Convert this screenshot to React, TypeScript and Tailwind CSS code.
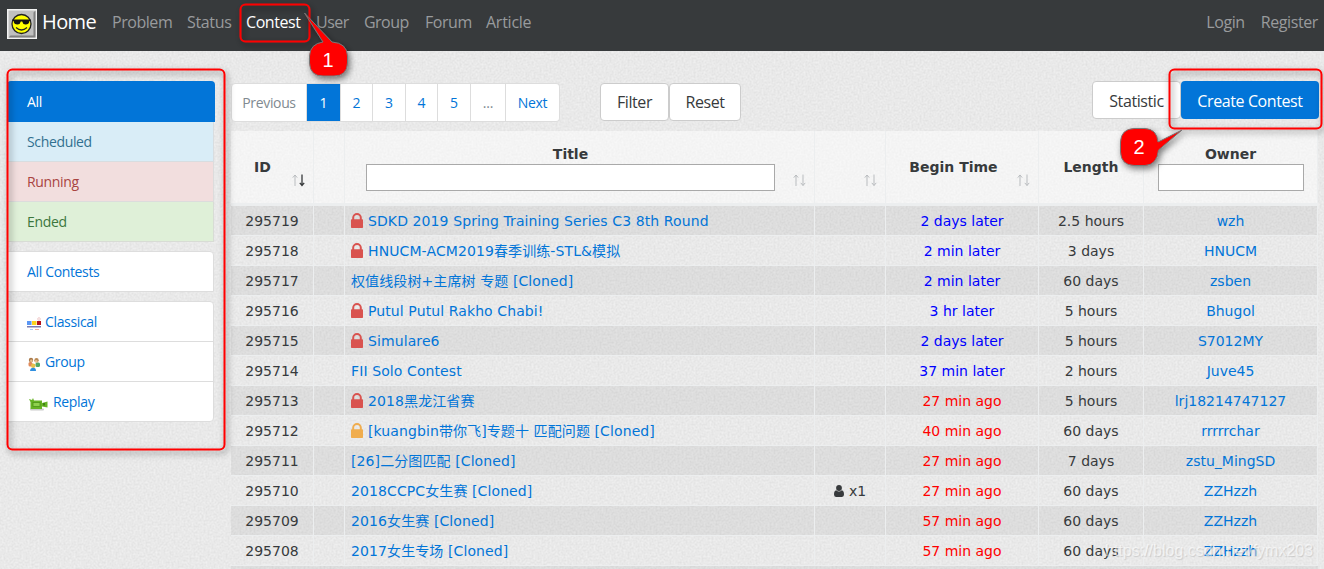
import React from "react";

const seg = "font-['Open_Sans','Noto_Sans',sans-serif]";

type Row = { id: string; lock?: "red" | "orange"; title: string; team?: string; time: string; len: string; owner: string };

const rows: Row[] = [
  { id: "295719", lock: "red", title: "SDKD 2019 Spring Training Series C3 8th Round", time: "2 days later", len: "2.5 hours", owner: "wzh" },
  { id: "295718", lock: "red", title: "HNUCM-ACM2019春季训练-STL&模拟", time: "2 min later", len: "3 days", owner: "HNUCM" },
  { id: "295717", title: "权值线段树+主席树 专题 [Cloned]", time: "2 min later", len: "60 days", owner: "zsben" },
  { id: "295716", lock: "red", title: "Putul Putul Rakho Chabi!", time: "3 hr later", len: "5 hours", owner: "Bhugol" },
  { id: "295715", lock: "red", title: "Simulare6", time: "2 days later", len: "5 hours", owner: "S7012MY" },
  { id: "295714", title: "FII Solo Contest", time: "37 min later", len: "2 hours", owner: "Juve45" },
  { id: "295713", lock: "red", title: "2018黑龙江省赛", time: "27 min ago", len: "5 hours", owner: "lrj18214747127" },
  { id: "295712", lock: "orange", title: "[kuangbin带你飞]专题十 匹配问题 [Cloned]", time: "40 min ago", len: "60 days", owner: "rrrrrchar" },
  { id: "295711", title: "[26]二分图匹配 [Cloned]", time: "27 min ago", len: "7 days", owner: "zstu_MingSD" },
  { id: "295710", title: "2018CCPC女生赛 [Cloned]", team: "x1", time: "27 min ago", len: "60 days", owner: "ZZHzzh" },
  { id: "295709", title: "2016女生赛 [Cloned]", time: "57 min ago", len: "60 days", owner: "ZZHzzh" },
  { id: "295708", title: "2017女生专场 [Cloned]", time: "57 min ago", len: "60 days", owner: "ZZHzzh" },
];

const cols = "grid grid-cols-[83px_31px_470px_71px_153px_105px_174px]";
const cell = "border-r border-[#eceeef]";

function Smiley() {
  return (
    <svg width="30" height="30" viewBox="0 0 30 30" className="shrink-0">
      <rect width="30" height="30" fill="#f2f2f2" />
      <rect x="1.5" y="1.5" width="27" height="27" fill="#c0c0c0" />
      <path d="M28.5 1.5V28.5H1.5L3.5 26.5H26.5V3.5Z" fill="#808080" />
      <circle cx="14.5" cy="15" r="9.5" fill="#ffff00" stroke="#222" strokeWidth="1.3" />
      <path d="M5.5 10.5H23.5V12H22.5Q22 15.5 18.5 15.5Q15.5 15 15.2 12.5H13.8Q13.500 15 10.500 15.500Q7 15.500 6.500 12H5.500Z" fill="#111" />
      <path d="M9 18.500Q14.500 23.500 20 18.500" fill="none" stroke="#222" strokeWidth="1.200" />
    </svg>
  );
}

function Lock({ color }: { color: "red" | "orange" }) {
  return (
    <svg width="12" height="15" viewBox="0 0 12 15" className={`mt-[7px] mr-[5px] shrink-0 ${color === "red" ? "text-[#d9534f]" : "text-[#f0ad4e]"}`}>
      <path d="M2.200 7V4.800A3.800 3.800 0 0 1 9.800 4.800V7" fill="none" stroke="currentColor" strokeWidth="2" />
      <rect y="6.300" width="12" height="8.700" rx="0.700" fill="currentColor" />
    </svg>
  );
}

function Person() {
  return (
    <svg width="10" height="12" viewBox="0 0 10 12" className="mr-[5px]">
      <circle cx="5" cy="3" r="2.900" fill="#373a3c" />
      <path d="M2.200 5.300Q5 7.700 7.800 5.300Q10 5.800 10 9.600Q10 12 8 12H2Q0 12 0 9.600Q0 5.800 2.200 5.300Z" fill="#373a3c" />
    </svg>
  );
}

function ClassicalIcon() {
  return (
    <svg width="15" height="15" viewBox="0 0 15 15" className="mt-[5px]">
      <rect x="0" y="4" width="4.500" height="4" fill="#5b97f5" />
      <rect x="5" y="4" width="4.500" height="4" fill="#fcd21c" />
      <rect x="10" y="4" width="4" height="4" fill="#b3101b" />
      <circle cx="12" cy="2" r="1.300" fill="none" stroke="#eab5b5" strokeWidth=".7" />
      <rect x="0" y="9" width="14" height="1.500" fill="#7a7cb0" />
      <rect x="3" y="12" width="3" height="1" fill="#a9cdf5" />
      <rect x="8" y="12" width="4" height="1" fill="#f0b0a0" />
    </svg>
  );
}

function GroupIcon() {
  return (
    <svg width="15" height="15" viewBox="0 0 15 15" className="mt-[5px]">
      <rect x="1.500" y="5" width="4" height="4.500" rx="1.500" fill="#e08a5a" />
      <rect x="8.500" y="5.500" width="4.500" height="4.500" rx="1.500" fill="#54a565" />
      <circle cx="4" cy="3" r="2.200" fill="#a9794a" />
      <circle cx="9.500" cy="3.300" r="2.200" fill="#b98a55" />
      <circle cx="4.300" cy="3.800" r="1.300" fill="#e8bf90" />
      <circle cx="9.200" cy="4.200" r="1.300" fill="#e8bf90" />
      <circle cx="6.200" cy="8.700" r="2.200" fill="#e8c04a" />
      <path d="M3 14Q3.500 10.800 6.200 10.800Q9 10.800 9 14Z" fill="#2f8fe0" />
    </svg>
  );
}

function ReplayIcon() {
  return (
    <svg width="23" height="15" viewBox="0 0 23 15" className="mt-[5px]">
      <rect x="3" y="11.500" width="14" height="2" rx="1" fill="#ccc" />
      <path d="M2 2L5 3L6 1L7 3.500H15V6L20.500 4.500V10.500L15 9.500V12H3.500V5Z" fill="#66b324" />
      <rect x="6" y="5.500" width="7" height="4" fill="#8fd04e" stroke="#4c9318" strokeWidth=".8" />
      <rect x="16" y="6" width="2" height="2.500" fill="#3f8014" />
    </svg>
  );
}

function Sort({ active }: { active?: boolean }) {
  return (
    <svg width="14" height="13" viewBox="0 0 14 13" fill="none" strokeWidth="1">
      <path d="M3 12V1M0.800 3.600L3 1L5.200 3.600" stroke="#b9bcbf" />
      <path d="M10 0.500V11.500M7.800 8.900L10 11.500L12.200 8.900" stroke={active ? "#373a3c" : "#b9bcbf"} strokeWidth={active ? "1.300" : "1"} />
    </svg>
  );
}

function Grain() {
  return (
    <svg className="absolute inset-0 h-full w-full" aria-hidden="true">
      <filter id="grain" colorInterpolationFilters="sRGB" x="0" y="0" width="100%" height="100%">
        <feTurbulence type="fractalNoise" baseFrequency="0.5" numOctaves="2" seed="4" />
        <feColorMatrix type="matrix" values="0.09 0 0 0 0.868  0.09 0 0 0 0.868  0.09 0 0 0 0.868  0 0 0 0 1" />
      </filter>
      <rect width="100%" height="100%" filter="url(#grain)" />
    </svg>
  );
}

const navItems = [
  { t: "Problem", c: "w-[75px] tracking-[-0.45px]" },
  { t: "Status", c: "w-[59px] tracking-[-0.35px]" },
  { t: "Contest", c: "w-[70px] tracking-[-0.45px] text-white" },
  { t: "User", c: "w-[48px] tracking-[-0.5px]" },
  { t: "Group", c: "w-[61px] tracking-[-0.55px]" },
  { t: "Forum", c: "w-[61px] tracking-[-0.45px]" },
  { t: "Article", c: "w-[60px] tracking-[-0.25px]" },
];

const pages = [
  { t: "Previous", c: "w-[76px] text-[#818a91] border-l rounded-l-[4px] tracking-[-0.35px]" },
  { t: "1", c: "w-[34px] bg-[#0275d8] text-white border-[#0275d8]" },
  { t: "2", c: "w-[32px] text-[#0275d8]" },
  { t: "3", c: "w-[33px] text-[#0275d8]" },
  { t: "4", c: "w-[32px] text-[#0275d8]" },
  { t: "5", c: "w-[33px] text-[#0275d8]" },
  { t: "...", c: "w-[35px] text-[#818a91]" },
  { t: "Next", c: "w-[54px] text-[#0275d8] rounded-r-[4px]" },
];

export default function App() {
  return (
    <div className="relative flex h-[569px] w-[1324px] flex-col overflow-hidden bg-[#e9e9e9]">
      <Grain />
      <header className={`relative flex h-[51px] shrink-0 items-start bg-[#373a3c] pl-[7px] text-base text-[#999b9d] ${seg}`}>
        <div className="mt-[9px] flex h-[30px] items-center">
          <Smiley />
        </div>
        <span className="mt-[7px] ml-[5px] w-[70px] text-[20px] leading-[30px] tracking-[-0.6px] text-white">Home</span>
        <nav className="mt-[10px] flex leading-6">
          {navItems.map((n) => (
            <a key={n.t} className={n.c}>{n.t}</a>
          ))}
        </nav>
        <div className="mt-[10px] mr-[6px] ml-auto flex gap-[16px] leading-6 tracking-[-0.4px]">
          <a>Login</a>
          <a>Register</a>
        </div>
      </header>

      <div className="relative flex min-h-0 flex-1">
        <aside className={`ml-[7px] flex w-[208px] shrink-0 flex-col gap-[9px] pt-[30px] text-[14px] leading-[20px] tracking-[-0.35px] ${seg}`}>
          <div>
            <div className="h-[41px] rounded-t-[4px] bg-[#0275d8] pt-[11px] pl-[20px] text-white">All</div>
            <div className="mr-px h-[40px] border-r border-b border-[#d8dde0] bg-[#d9edf7] pt-[10px] pl-[20px] text-[#31708f]">Scheduled</div>
            <div className="mr-px h-[40px] border-r border-b border-[#dcdcdc] bg-[#f2dede] pt-[10px] pl-[20px] text-[#a94442]">Running</div>
            <div className="mr-px h-[40px] border-r border-b border-[#d8dcd5] bg-[#dff0d8] pt-[10px] pl-[20px] text-[#3c763d]">Ended</div>
          </div>
          <div className="mr-px h-[41px] rounded-tr-[4px] border border-[#ddd] bg-white pt-[10px] pl-[19px] text-[#0275d8]">All Contests</div>
          <div className="mr-px h-[121px] rounded-r-[4px] border border-[#ddd] bg-white text-[#0275d8]">
            <div className="flex h-[40px] gap-[3px] border-b border-[#ddd] pt-[10px] pl-[19px]"><ClassicalIcon />Classical</div>
            <div className="flex h-[40px] gap-[3px] border-b border-[#ddd] pt-[10px] pl-[19px]"><GroupIcon />Group</div>
            <div className="flex h-[39px] gap-[3px] pt-[10px] pl-[19px]"><ReplayIcon />Replay</div>
          </div>
        </aside>

        <main className="ml-[16px] flex w-[1088px] shrink-0 flex-col">
          <div className={`flex h-[80px] shrink-0 items-start pt-[30px] ${seg}`}>
            <div className="mt-[2px] flex h-[39px] text-[14px] tracking-[-0.25px]">
              {pages.map((p) => (
                <span key={p.t} className={`flex items-center justify-center border-y border-r border-[#ddd] ${p.c} ${p.t === "1" ? "" : "bg-white"}`}>{p.t}</span>
              ))}
            </div>
            <div className="mt-[2px] ml-[40px] flex h-[38px] text-[16px] tracking-[-0.4px] text-[#373a3c]">
              <button className="w-[69px] rounded-[4px] border border-[#ccc] bg-white">Filter</button>
              <button className="w-[72px] rounded-[4px] border border-[#ccc] bg-white">Reset</button>
            </div>
            <div className="ml-auto flex h-[38px] text-[16px] tracking-[-0.4px]">
              <button className="w-[89px] rounded-[4px] border border-[#ccc] bg-white pt-px text-[#373a3c]">Statistic</button>
              <button className="w-[138px] rounded-[4px] bg-[#0275d8] pt-px text-white">Create Contest</button>
            </div>
          </div>

          <div className="w-[1087px] font-['DejaVu_Sans','Noto_Sans_CJK_SC',sans-serif] text-[14px] text-[#373a3c]">
            <div className={`${cols} h-[75px] border-b-3 border-[#eceeef] bg-white/50 text-center font-bold leading-[20px]`}>
              <div className={`${cell} flex flex-col items-end pt-[26px] pr-[7px]`}>
                <span className="w-full pr-[12px]">ID</span>
                <span className="-mt-[3px]"><Sort active /></span>
              </div>
              <div className={cell} />
              <div className={`${cell} flex justify-end pt-[13px] pr-[7px]`}>
                <div className="flex flex-col items-center">
                  <span>Title</span>
                  <div className="h-[27px] w-[409px] border border-[#a9a9a9] bg-white" />
                </div>
                <span className="mt-[30px] ml-[18px]"><Sort /></span>
              </div>
              <div className={`${cell} flex justify-end pt-[43px] pr-[7px]`}><Sort /></div>
              <div className={`${cell} flex flex-col items-end pt-[26px] pr-[7px]`}>
                <span className="w-full pr-[10px]">Begin Time</span>
                <span className="-mt-[3px]"><Sort /></span>
              </div>
              <div className={`${cell} pt-[26px]`}>Length</div>
              <div className={`${cell} flex flex-col items-center pt-[13px]`}>
                <span>Owner</span>
                <div className="h-[27px] w-[146px] border border-[#a9a9a9] bg-white" />
              </div>
            </div>
            {rows.map((r, i) => (
              <div key={r.id} className={`${cols} h-[30px] border-b border-[#eceeef] text-center leading-[31px] whitespace-nowrap ${i % 2 === 0 ? "bg-black/5" : ""}`}>
                <div className={`${cell} h-[29px]`}>{r.id}</div>
                <div className={cell} />
                <div className={`${cell} flex h-[29px] pl-[6px] tracking-[0.1px] text-[#0275d8]`}>
                  {r.lock && <Lock color={r.lock} />}
                  {r.title}
                </div>
                <div className={`${cell} flex h-[29px] items-center justify-center`}>
                  {r.team && <><Person /><span className="pt-px">{r.team}</span></>}
                </div>
                <div className={`${cell} h-[29px] ${r.time.endsWith("later") ? "text-[#0000ff]" : "text-[#ff0000]"}`}>{r.time}</div>
                <div className={`${cell} h-[29px]`}>{r.len}</div>
                <div className={`${cell} h-[29px] text-[#0275d8]`}>{r.owner}</div>
              </div>
            ))}
            <div className="h-[4px] bg-black/5" />
          </div>
        </main>
      </div>

      <div className="absolute top-[539px] left-[1105px] font-['Liberation_Sans',sans-serif] text-[16px] whitespace-nowrap text-white/60 [text-shadow:1px_1px_1px_rgba(0,0,0,0.12)]">https://blog.csdn.net/fymx203</div>

      <svg className="absolute inset-0" width="1324" height="569" viewBox="0 0 1324 569" fill="none">
        <defs>
          <filter id="shade" x="-30%" y="-30%" width="170%" height="170%">
            <feDropShadow dx="2" dy="3" stdDeviation="3" floodColor="#000" floodOpacity=".5" />
          </filter>
        </defs>
        <g stroke="#f00" strokeWidth="2" filter="url(#shade)">
          <rect x="240.500" y="4.500" width="69" height="37" rx="5" />
          <rect x="7.500" y="69.500" width="217" height="380" rx="5" />
          <rect x="1169.500" y="69.500" width="152" height="59" rx="5" />
        </g>
        <g fill="#f00" stroke="#777" strokeWidth="1" filter="url(#shade)">
          <path d="M304.500 13L332 42Q347 43 347.500 56V63Q347 76 334 76H323Q310 76 309.500 63V56Q310 44 323 42Z" />
          <path d="M1182 130L1158.500 150Q1157 165 1145 165.500H1134Q1121 165 1120.500 152V142Q1121 129 1134 128.500H1145Q1157 129 1158 142Z" />
        </g>
        <g fill="#fff" fontFamily="Liberation Sans, sans-serif" fontSize="20" textAnchor="middle">
          <text x="328" y="67">1</text>
          <text x="1139" y="154">2</text>
        </g>
      </svg>
    </div>
  );
}
